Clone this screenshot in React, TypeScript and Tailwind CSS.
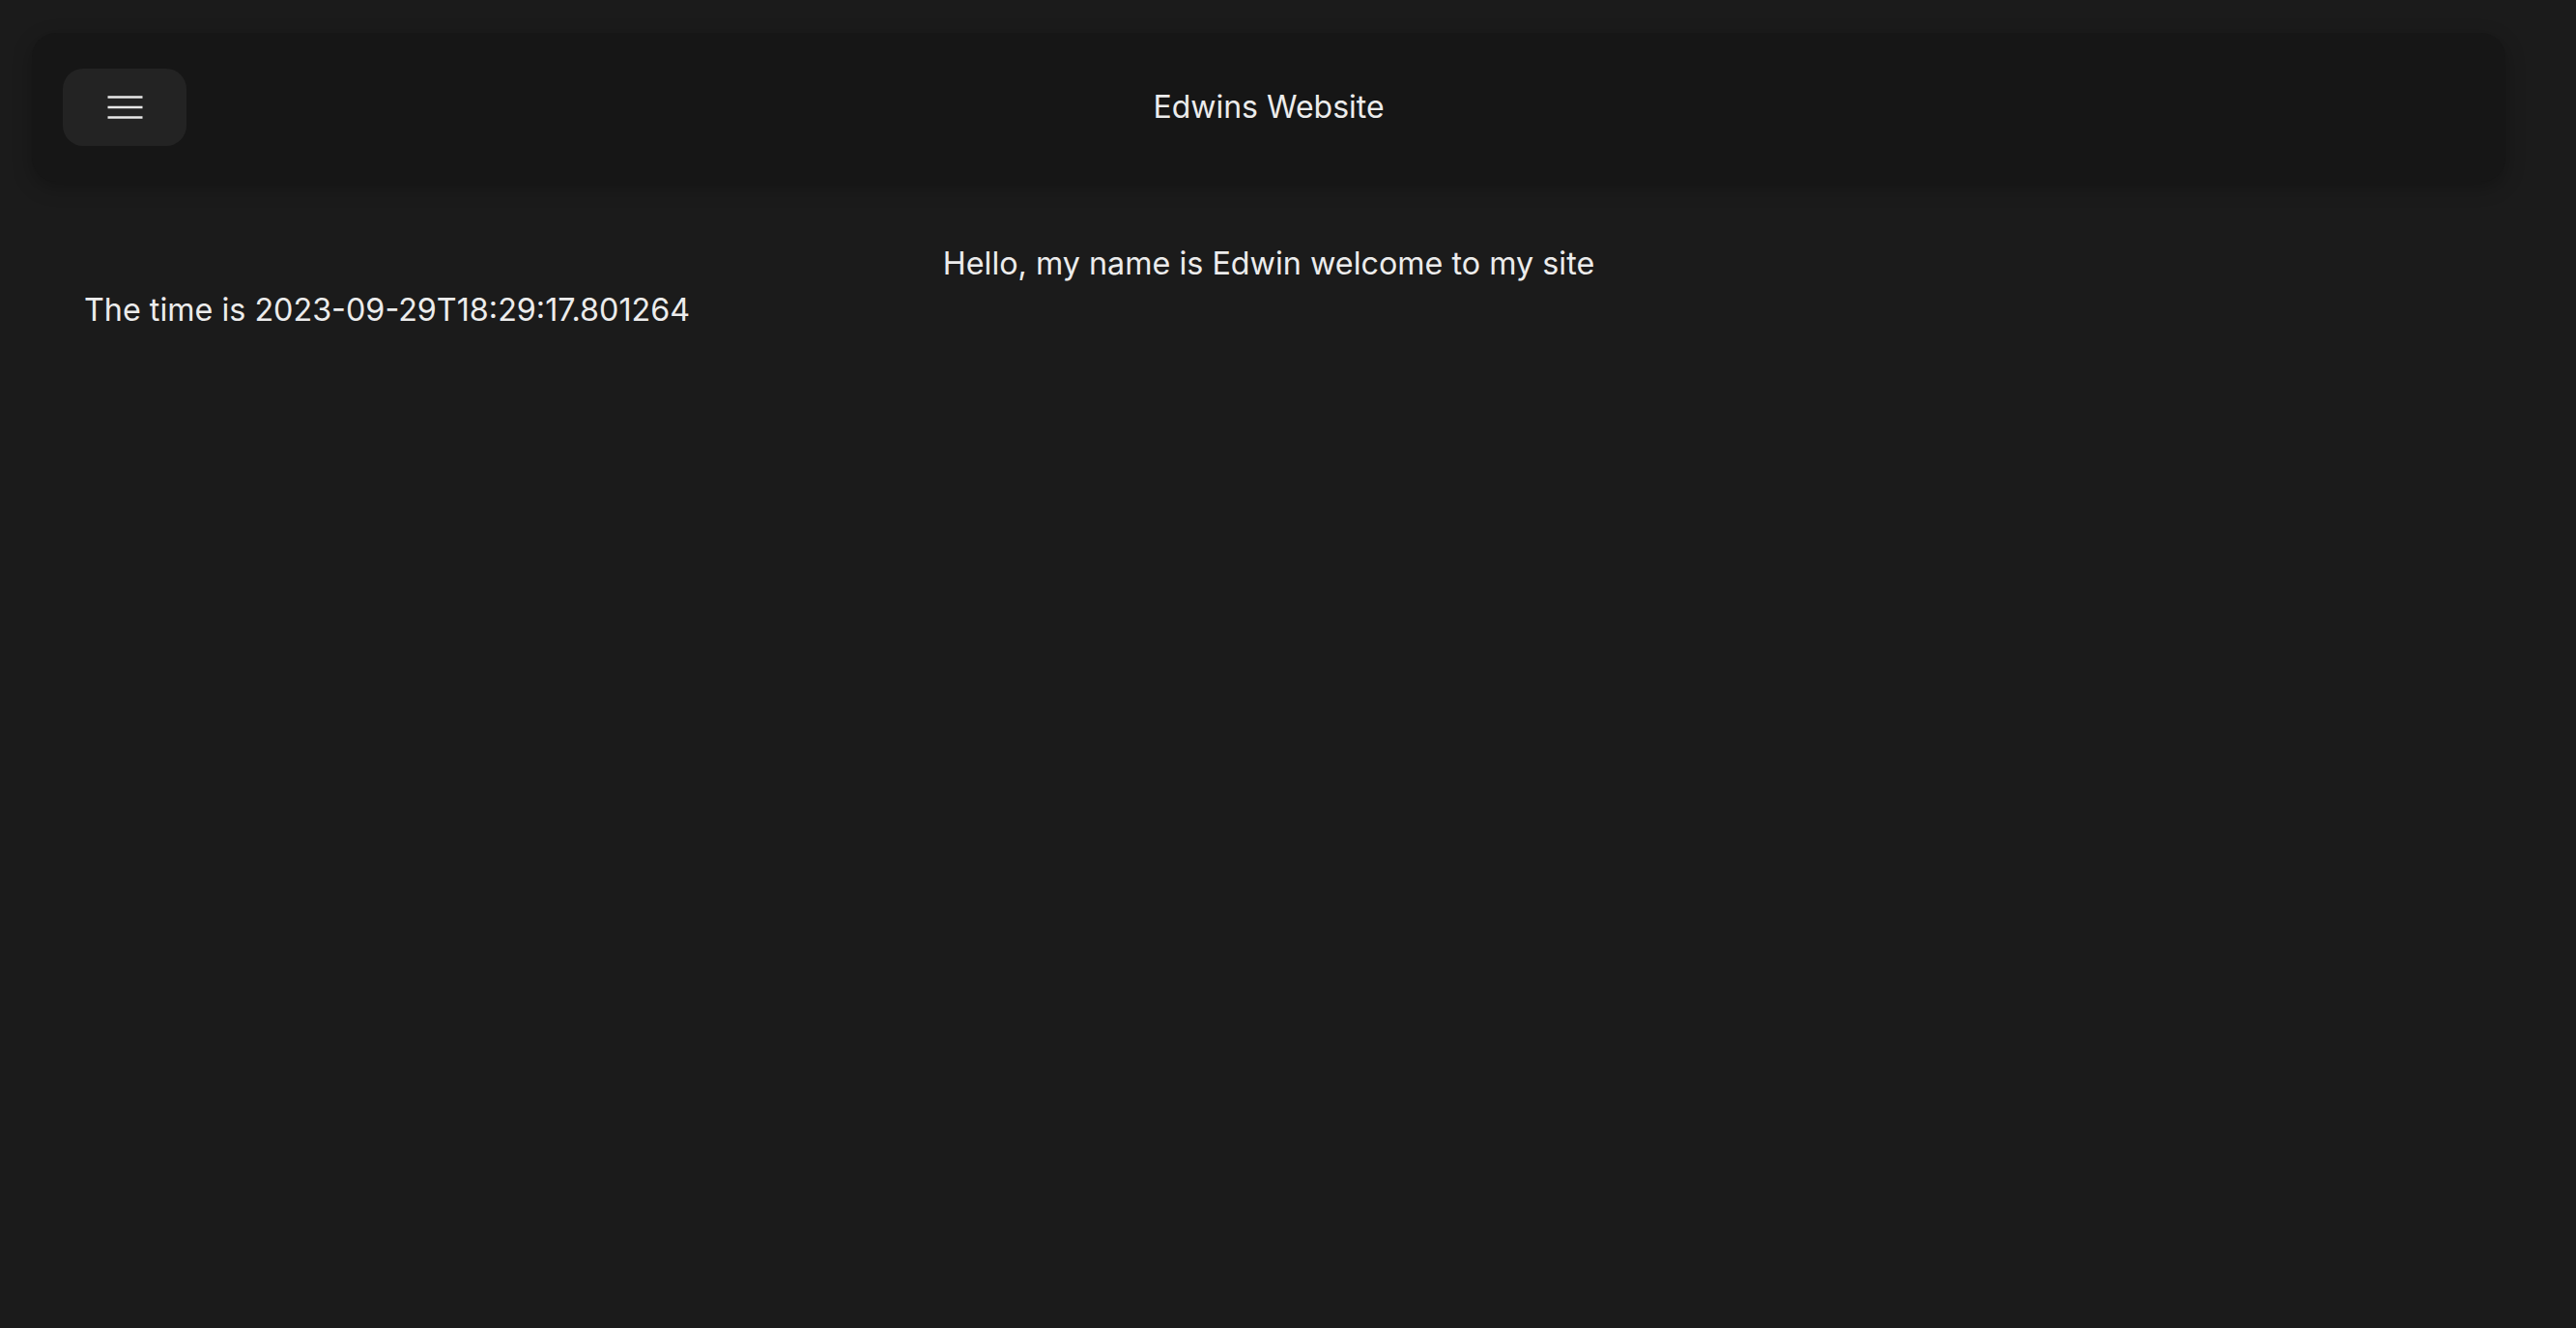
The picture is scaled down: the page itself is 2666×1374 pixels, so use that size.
export default function App() {
  return (
    <div className="h-screen w-full overflow-hidden bg-[#1b1b1b] text-[#ececec] font-['Inter',sans-serif] pt-[34px] pl-[33px] pr-[73px]">
      <header className="grid h-[154px] grid-cols-[1fr_auto_1fr] items-center rounded-[25px] bg-[#161616] px-[32px] shadow-[0_6px_20px_rgba(0,0,0,0.25)]">
        <div className="flex">
          <button className="flex h-[80px] w-[128px] items-center justify-center rounded-[21px] bg-[#232323]">
            <svg width="37" height="24" viewBox="0 0 37 24" fill="none">
              <line x1="0.5" y1="1.5" x2="36.5" y2="1.5" stroke="#e8e8e8" strokeWidth="2.6" />
              <line x1="0.5" y1="12" x2="36.5" y2="12" stroke="#e8e8e8" strokeWidth="2.6" />
              <line x1="0.5" y1="22.5" x2="36.5" y2="22.5" stroke="#e8e8e8" strokeWidth="2.6" />
            </svg>
          </button>
        </div>
        <h1 className="text-[32px] leading-[48px] font-normal">Edwins Website</h1>
        <div />
      </header>
      <main className="mt-[61px] px-[54px] text-[32.3px] leading-[48px]">
        <p className="text-center">Hello, my name is Edwin welcome to my site</p>
        <p>The time is 2023-09-29T18:29:17.801264</p>
      </main>
    </div>
  );
}
